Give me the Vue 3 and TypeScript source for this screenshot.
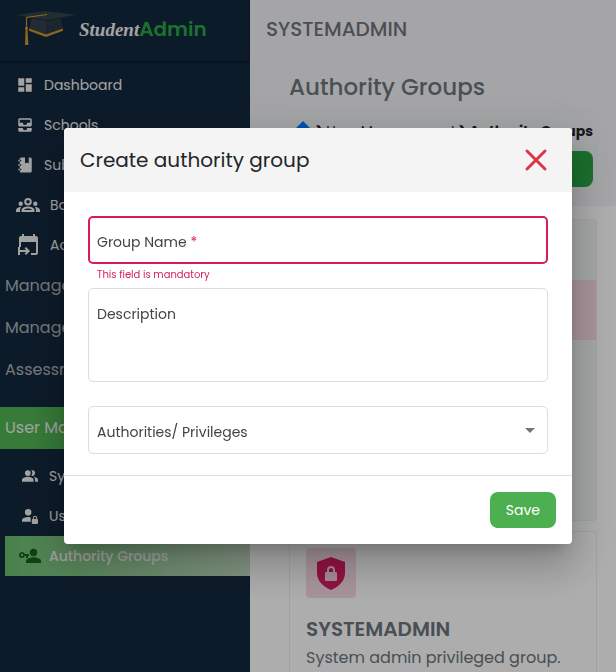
<script setup lang="ts">
import { ref } from 'vue'

interface NavItem {
  label: string
  icon: string
  wide?: boolean
}

const mainLinks: NavItem[] = [
  { label: 'Dashboard', icon: 'M3 13h8V3H3v10zm0 8h8v-6H3v6zm10 0h8V11h-8v10zm0-18v6h8V3h-8z' },
  { label: 'Schools', icon: 'M19 3H5a2 2 0 0 0-2 2v7a2 2 0 0 0 2 2h14a2 2 0 0 0 2-2V5a2 2 0 0 0-2-2zm0 6h-4a3 3 0 0 1-6 0H5V5h14v4zM15 16h6v3a2 2 0 0 1-2 2H5a2 2 0 0 1-2-2v-3h6a3 3 0 0 0 6 0z' },
  { label: 'Subjects', icon: 'M3 7V5h2V4a2 2 0 0 1 2-2h5v8l2.5-1.5L17 10V2h2a2 2 0 0 1 2 2v16a2 2 0 0 1-2 2H7a2 2 0 0 1-2-2v-1H3v-2h2v-4H3v-2h2V7H3zm2 0h2V5H5v2zm0 4v2h2v-2H5zm0 6v2h2v-2H5z' },
  { label: 'Boards', wide: true, icon: 'M12 5a3.8 3.8 0 1 0 0 7.600 3.800 3.800 0 0 0 0-7.600zm0 2a1.800 1.800 0 1 1 0 3.600 1.800 1.800 0 0 1 0-3.600zM4.700 8.500a2.200 2.200 0 1 0 0 4.400 2.200 2.200 0 0 0 0-4.400zM19.300 8.500a2.200 2.200 0 1 0 0 4.400 2.200 2.200 0 0 0 0-4.400zM12 13.600c-3 0-6.500 1.400-6.500 4V19h13v-1.400c0-2.600-3.500-4-6.500-4zm0 2c1.700 0 3.300.6 4 1.400H8c.7-.8 2.300-1.400 4-1.400zM5.200 14C2.500 13.900 0 15.200 0 17.300V19h4v-1.500c0-1.400.4-2.600 1.200-3.500zM18.800 14c2.700-.1 5.200 1.200 5.200 3.300V19h-4v-1.500c0-1.400-.4-2.600-1.200-3.500z' },
  { label: 'Academic Years', wide: true, icon: 'M20 22h-5v-2h5V9H5v5H3V5c0-1.1.9-2 2-2h1V1h2v2h9V1h2v2h1a2 2 0 0 1 2 2v15a2 2 0 0 1-2 2zM10 14l4 4-4 4-1.4-1.4 1.6-1.6H4v3H2v-8h2v3h6.200l-1.600-1.600z' },
]

const sections: string[] = ['Manage Students', 'Manage Teachers', 'Assessments']

const userLinks: NavItem[] = [
  { label: 'System Users', icon: 'M16.670 13.130C18.040 14.060 19 15.320 19 17v3h4v-3c0-2.180-3.570-3.470-6.330-3.870zM15 12a4 4 0 1 0-1.330-7.760 6 6 0 0 1 0 7.520c.42.14.86.24 1.330.24zM9 12a4 4 0 1 0 0-8 4 4 0 0 0 0 8zM9 13c-2.670 0-8 1.340-8 4v3h16v-3c0-2.660-5.330-4-8-4z' },
  { label: 'User Privileges', icon: 'M9.500 11.500a4.500 4.500 0 1 0 0-9 4.500 4.500 0 0 0 0 9zM13 14c-1-.3-2.300-.5-3.500-.5-3 0-8.500 1.500-8.500 4.500v2h12zM22 16v-1.500a3 3 0 0 0-6 0V16a1.500 1.500 0 0 0-1.500 1.500v4A1.500 1.500 0 0 0 16 23h6a1.500 1.500 0 0 0 1-1.500v-4A1.500 1.500 0 0 0 22 16zm-1.500 0h-3v-1.500a1.500 1.500 0 0 1 3 0V16z' },
]

const groupName = ref('')
const description = ref('')
const authority = ref('')
</script>

<template>
  <div class="page">
    <aside class="sidebar">
      <div class="brand">
        <svg class="cap" viewBox="0 0 62 38" aria-hidden="true">
          <path d="M17 7h28l3 13-17 6-17-6z" fill="#33424b" />
          <path d="M31 9v16l17-6-3-12z" fill="#2b3942" />
          <path d="M14 18.500l17 6 17-6v2.200l-17 6.300-17-6.300z" fill="#d0952c" />
          <path d="M1 5L31 1l30 4-30 5z" fill="#33434c" />
          <path d="M1 5l30 5 30-5v.8L31 11 1 5.800z" fill="#222f37" />
          <path d="M32 4.500L11.500 7.500V17" fill="none" stroke="#d0952c" stroke-width="1.200" />
          <circle cx="11.500" cy="18" r="1.500" fill="#d0952c" />
          <path d="M10.500 19h2l.9 16h-3.400z" fill="#d0952c" />
        </svg>
        <span class="brand-name"><span class="brand-script">Student</span><span class="brand-bold">Admin</span></span>
      </div>
      <nav class="nav">
        <a v-for="item in mainLinks" :key="item.label" href="#" class="link">
          <svg class="icon" :class="{ wide: item.wide }" viewBox="0 0 24 24" aria-hidden="true"><path :d="item.icon" fill-rule="evenodd" /></svg>
          <span>{{ item.label }}</span>
        </a>
        <a v-for="name in sections" :key="name" href="#" class="section">{{ name }}</a>
        <a href="#" class="section open">User Management</a>
        <div class="submenu">
          <a v-for="item in userLinks" :key="item.label" href="#" class="sublink">
            <svg class="subicon" viewBox="1 1 22 22" aria-hidden="true"><path :d="item.icon" fill-rule="evenodd" /></svg>
            <span>{{ item.label }}</span>
          </a>
          <a href="#" class="sublink current">
            <svg class="keyicon" viewBox="0 0 22 16" aria-hidden="true">
              <circle cx="14.500" cy="4.500" r="3.700" />
              <path d="M7 15v-2c0-2.500 5-3.700 7.500-3.700S22 10.500 22 13v2z" />
              <path fill-rule="evenodd" d="M3 4a3 3 0 1 0 2.800 4H7v2h2V8h1V6H5.800A3 3 0 0 0 3 4zm0 1.800a1.200 1.200 0 1 1 0 2.400 1.200 1.200 0 0 1 0-2.400z" />
            </svg>
            <span>Authority Groups</span>
          </a>
        </div>
      </nav>
    </aside>

    <div class="content">
      <header class="topbar">SYSTEMADMIN</header>
      <section class="intro">
        <h1>Authority Groups</h1>
        <div class="toolbar">
          <div class="crumbs">
            <svg class="home" viewBox="0 0 20 20" aria-hidden="true"><path d="M10 0l10 10h-3v9h-5v-6H8v6H3v-9H0z" /></svg>
            <span>❯</span>
            <a href="#">User Management</a>
            <span>❯</span>
            <strong>Authority Groups</strong>
          </div>
          <button type="button" class="add">Create</button>
        </div>
      </section>
      <main class="cards">
        <article class="card tinted"><div class="stripe"></div></article>
        <article class="card">
          <div class="badge">
            <svg viewBox="0 0 28 33" aria-hidden="true">
              <path d="M14 0L28 5v11c0 7-5 13-14 17C5 29 0 23 0 16V5z" fill="#d81b60" />
              <rect x="8" y="15" width="12" height="9" rx="1" fill="#f4d0dc" />
              <path d="M11 15v-2a3 3 0 0 1 6 0v2" fill="none" stroke="#f4d0dc" stroke-width="2" />
            </svg>
          </div>
          <h2>SYSTEMADMIN</h2>
          <p>System admin privileged group.</p>
        </article>
      </main>
    </div>

    <div class="backdrop">
      <form class="dialog" role="dialog" aria-labelledby="dialog-title" @submit.prevent>
        <header class="dialog-head">
          <h2 id="dialog-title">Create authority group</h2>
          <button type="button" class="close" aria-label="Close">
            <svg viewBox="0 0 24 24" aria-hidden="true"><path d="M3 3l18 18M21 3L3 21" /></svg>
          </button>
        </header>
        <div class="dialog-body">
          <div class="field invalid">
            <label for="group-name">Group Name <span class="star">*</span></label>
            <input id="group-name" v-model="groupName" type="text" aria-describedby="group-error" />
          </div>
          <p id="group-error" class="error">This field is mandatory</p>
          <div class="field tall">
            <label for="description">Description</label>
            <textarea id="description" v-model="description"></textarea>
          </div>
          <div class="field">
            <label for="authorities">Authorities/ Privileges</label>
            <select id="authorities" v-model="authority">
              <option value=""></option>
            </select>
            <svg class="arrow" viewBox="0 0 10 5" aria-hidden="true"><path d="M0 0h10L5 5z" /></svg>
          </div>
        </div>
        <footer class="dialog-foot">
          <button type="submit" class="save">Save</button>
        </footer>
      </form>
    </div>
  </div>
</template>

<style>
body {
  margin: 0;
}
</style>

<style scoped>
* {
  box-sizing: border-box;
}
.page {
  display: flex;
  height: 100vh;
  overflow: hidden;
  font-family: Poppins, Inter, "Noto Sans", sans-serif;
  font-size: 14px;
  color: #212529;
}
a {
  color: inherit;
  text-decoration: none;
}
h1, h2, p {
  margin: 0;
}
button, input, textarea, select {
  font: inherit;
  color: inherit;
}
.sidebar {
  flex: 0 0 250px;
  background: #13283e;
  color: #f0f0f0;
}
.brand {
  display: flex;
  align-items: center;
  gap: 2px;
  height: 61px;
  padding: 0 0 3px 15px;
  box-shadow: 0 1px 2px rgba(0, 0, 0, 0.5);
}
.cap {
  width: 62px;
  height: 38px;
}
.brand-name {
  display: flex;
  align-items: baseline;
  line-height: 30px;
}
.brand-script {
  font-family: "Liberation Serif", serif;
  font-size: 19px;
  font-weight: 700;
  font-style: italic;
}
.brand-bold {
  color: #28a745;
  font-size: 20px;
  font-weight: 600;
}
.nav {
  padding-top: 4px;
}
.link {
  display: flex;
  align-items: center;
  gap: 10px;
  height: 40px;
  padding-left: 16px;
}
.icon {
  width: 18px;
  height: 18px;
  fill: currentColor;
}
.icon.wide {
  width: 24px;
  height: 24px;
}
.section {
  display: flex;
  align-items: center;
  height: 42px;
  padding: 0 0 2px 5px;
  font-size: 16px;
  color: #b0b4b8;
}
.section.open {
  margin-top: 16px;
  background: #52b655;
  color: #f0f0f0;
}
.submenu {
  padding: 7px 0 0 5px;
}
.sublink {
  display: flex;
  align-items: center;
  gap: 11px;
  height: 40px;
  padding-left: 17px;
  color: #f0f0f0;
}
.subicon {
  width: 16px;
  height: 16px;
  fill: currentColor;
}
.sublink.current {
  gap: 8px;
  padding-left: 14px;
  background: linear-gradient(90deg, #6abf6e, #c3dcc4);
  font-weight: 500;
}
.keyicon {
  width: 22px;
  height: 16px;
  fill: #1b5e20;
}
.content {
  flex: 1;
  min-width: 0;
  background: #fff;
}
.topbar {
  display: flex;
  align-items: center;
  height: 61px;
  padding: 0 16px 3px;
  background: #f3f4f7;
  color: #6c757d;
  font-size: 20px;
  font-weight: 500;
  box-shadow: 0 1px 2px rgba(0, 0, 0, 0.7);
}
.intro {
  height: 145px;
  padding: 8px 19px 14px 39px;
  background: #f3f4f7;
}
h1 {
  font-size: 23px;
  font-weight: 500;
  line-height: 36px;
  color: #6c757d;
}
.toolbar {
  display: flex;
  flex-direction: column;
  align-items: flex-end;
  gap: 10px;
  height: 82px;
  margin-top: 6px;
  padding: 9px 3px;
  border: 1px solid #f0f1f4;
}
.crumbs {
  display: flex;
  align-items: center;
  justify-content: space-between;
  width: 100%;
  height: 22px;
  line-height: 20px;
  white-space: nowrap;
}
.home {
  width: 20px;
  height: 20px;
  fill: #007bff;
}
.add {
  width: 120px;
  height: 36px;
  flex: none;
  border: 0;
  border-radius: 8px;
  background: #28a745;
  color: #fff;
}
.cards {
  display: grid;
  gap: 10px;
  padding: 13px 19px 13px 39px;
}
.card {
  min-height: 302px;
  padding: 16px;
  border: 1px solid #eee;
  border-radius: 4px;
  color: #6c757d;
}
.card.tinted {
  padding: 60px 0;
  background: #f2f8f5;
}
.stripe {
  height: 60px;
  background: #f7dbe4;
}
.badge {
  display: grid;
  place-items: center;
  width: 50px;
  height: 50px;
  border-radius: 4px;
  background: #f7dbe4;
}
.badge svg {
  width: 28px;
  height: 33px;
}
.card h2 {
  margin-top: 16px;
  font-size: 20px;
  font-weight: 600;
  line-height: 30px;
}
.card p {
  font-size: 16px;
  line-height: 28px;
}
.backdrop {
  position: fixed;
  inset: 0;
  display: flex;
  align-items: center;
  padding: 0 44px 0 64px;
  background: rgba(0, 0, 0, 0.32);
}
.dialog {
  flex: 1;
  overflow: hidden;
  border-radius: 4px;
  background: #fff;
  box-shadow: 0 11px 15px -7px rgba(0, 0, 0, 0.2), 0 24px 38px 3px rgba(0, 0, 0, 0.14), 0 9px 46px 8px rgba(0, 0, 0, 0.12);
}
.dialog-head {
  display: flex;
  align-items: center;
  justify-content: space-between;
  height: 64px;
  padding: 0 24px 0 16px;
  background: #f4f4f4;
}
.dialog-head h2 {
  font-size: 20px;
  font-weight: 400;
  line-height: 32px;
}
.close {
  display: flex;
  padding: 0;
  border: 0;
  background: none;
}
.close svg {
  width: 24px;
  height: 24px;
  fill: none;
  stroke: #dc3545;
  stroke-width: 3;
  stroke-linecap: round;
}
.dialog-body {
  padding: 24px 24px 21px;
}
.field {
  display: grid;
  align-items: center;
  height: 48px;
  border: 1px solid #dedede;
  border-radius: 5px;
}
.field > * {
  grid-area: 1 / 1;
}
.field label {
  z-index: 1;
  padding: 4px 8px 0;
  line-height: 20px;
  color: #444;
  pointer-events: none;
}
.field input, .field textarea, .field select {
  width: 100%;
  height: 100%;
  padding: 4px 8px 0;
  border: 0;
  outline: 0;
  background: none;
  appearance: none;
  resize: none;
}
.field.invalid {
  border: 2px solid #d81b60;
}
.field.invalid label {
  padding-left: 7px;
}
.star {
  color: #d81b60;
}
.error {
  height: 24px;
  padding: 3px 9px 0;
  font-size: 10px;
  line-height: 15px;
  color: #d81b60;
}
.field.tall {
  align-items: start;
  height: 94px;
  margin-bottom: 24px;
}
.field.tall label, .field.tall textarea {
  padding-top: 15px;
}
.arrow {
  justify-self: end;
  width: 10px;
  height: 5px;
  margin-right: 12px;
  fill: #757575;
  pointer-events: none;
}
.dialog-foot {
  display: flex;
  justify-content: flex-end;
  padding: 16px;
  border-top: 1px solid #dedede;
}
.save {
  height: 36px;
  padding: 0 16px;
  border: 0;
  border-radius: 8px;
  background: #4caf50;
  color: #fff;
}
</style>
